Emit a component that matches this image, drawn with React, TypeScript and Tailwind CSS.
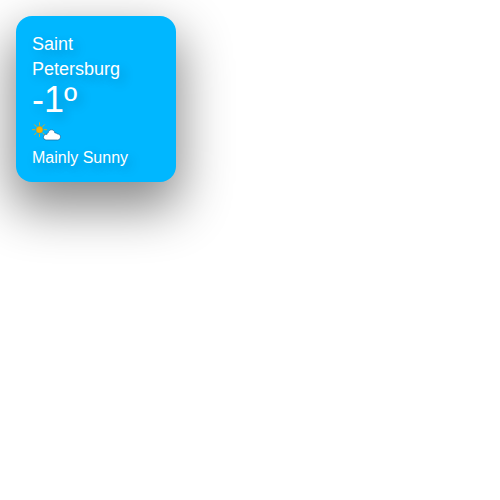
const rays = [0, 45, 90, 135, 180, 225, 270, 315];

function WeatherIcon() {
  return (
    <svg className="block h-[20px] w-[30px]" viewBox="0 0 30 20" fill="none">
      <g stroke="#f0a80c" strokeWidth="0.9" strokeLinecap="round">
        {rays.map((angle) => (
          <path key={angle} d="M7.5 3.1V0.7" transform={`rotate(${angle} 7.5 7.7)`} />
        ))}
      </g>
      <circle cx="7.5" cy="7.7" r="3.2" fill="#ffb300" stroke="#d99a20" strokeWidth="0.6" />
      <path
        d="M13.9 18A2.85 2.85 0 0 1 13.5 12.4C14 12.2 14.4 12.3 15 12.4C15 11.3 15.6 10.7 16.3 10.6C16.8 6.8 22.4 6.8 22.9 11C24.1 10.8 25 11.3 25.3 12C29.6 11.7 29.5 18 25.6 18Z"
        fill="white"
        stroke="#1f6799"
        strokeWidth="0.7"
        strokeLinejoin="round"
      />
    </svg>
  );
}

export default function App() {
  return (
    <main className="h-[500px] w-[500px] overflow-hidden bg-white p-4 font-['Liberation_Sans',Arial,sans-serif]">
      <section className="flex h-[166px] w-[160px] flex-col rounded-[16px] bg-[#00b7ff] p-4 text-white shadow-[0_22px_50px_5px_rgba(0,0,0,0.45)] [text-shadow:4px_4px_12px_rgba(0,0,0,0.22)]">
        <h1 className="w-[100px] text-[18px] leading-[25px]">Saint Petersburg</h1>
        <p className="text-[36px] leading-[36px]">-1º</p>
        <div className="mt-1">
          <WeatherIcon />
        </div>
        <p className="mt-1 text-base leading-[24px] whitespace-nowrap">Mainly Sunny</p>
      </section>
    </main>
  );
}
